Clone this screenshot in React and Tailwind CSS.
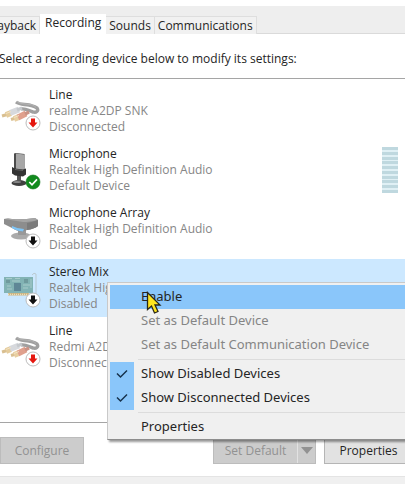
import { useState } from 'react';

const devices = [
  { id: 'realme', name: 'Line', detail: 'realme A2DP SNK', status: 'Disconnected', icon: 'line', badge: 'red' },
  { id: 'mic', name: 'Microphone', detail: 'Realtek High Definition Audio', status: 'Default Device', icon: 'mic', badge: 'ok', meter: true },
  { id: 'array', name: 'Microphone Array', detail: 'Realtek High Definition Audio', status: 'Disabled', icon: 'array', badge: 'black' },
  { id: 'stereo', name: 'Stereo Mix', detail: 'Realtek High Definition Audio', status: 'Disabled', icon: 'card', badge: 'black' },
  { id: 'redmi', name: 'Line', detail: 'Redmi A2DP SNK', status: 'Disconnected', icon: 'line', badge: 'red' },
];

function Badge({ kind }) {
  if (kind === 'ok') {
    return (
      <g>
        <circle cx="33" cy="41" r="7" fill="#118a1d" stroke="#0b7417" strokeWidth="0.6" />
        <path d="M29.3 41l2.7 2.8 5-5.4" fill="none" stroke="#fff" strokeWidth="1.7" />
      </g>
    );
  }
  const fill = kind === 'red' ? '#e5170f' : '#111';
  return (
    <g>
      <circle cx="33" cy="41" r="7" fill="#fff" stroke="#b4b4b4" strokeWidth="0.9" />
      <path d="M31 36.5h4v4h2.5L33 45.5l-4.5-5H31z" fill={fill} />
    </g>
  );
}

function LineArt() {
  return (
    <g fill="none">
      <path d="M16 20c4 3 8 2 13 3 4 1 6 1 8 3 2 3-1 5-4 4-4-1-7-4-12-3" stroke="#a0a0a0" strokeWidth="3.4" />
      <path d="M17 19.5c4 3 8 2 12 3 3 0 5 1 7 3" stroke="#b8b8b8" strokeWidth="0.8" />
      <path d="M2 34l5-1.5" stroke="#d9bf90" strokeWidth="3" />
      <path d="M6 33l5-2" stroke="#e5cc9c" strokeWidth="6" />
      <path d="M10 31l9-3.5" stroke="#d7d9dd" strokeWidth="6" />
      <path d="M17 28l5-2" stroke="#c5c8cc" strokeWidth="3.5" />
      <path d="M11 37.5l5-1.500" stroke="#d9bf90" strokeWidth="3" />
      <path d="M14 37l5-2" stroke="#e8cfa2" strokeWidth="6" />
      <path d="M18 35.500l8-4" stroke="#e0a08d" strokeWidth="6" />
      <path d="M25 32l4-2" stroke="#ca9285" strokeWidth="3.5" />
      <path d="M6 31.5l5-2M14 35.5l5-2" stroke="#f3e2c3" strokeWidth="1" />
    </g>
  );
}

function MicArt() {
  return (
    <g>
      <ellipse cx="19" cy="42" rx="7.5" ry="3" fill="#404040" />
      <ellipse cx="17" cy="41" rx="4" ry="1" fill="#858585" />
      <path d="M17 33h4v7h-4z" fill="#555" />
      <path d="M14 12.500l2-.5 8.500 1v16l-8.500 1-2-2z" fill="#4b4b4b" />
      <path d="M16 12.500l8 1v16l-8-1z" fill="#a7a7a7" />
      <path d="M12 26l3 1.500 8 1 3-1v6l-3 2-8-1-3-2z" fill="#343434" />
      <path d="M15 28.500l8 1" fill="none" stroke="#6f6f6f" strokeWidth="0.8" />
    </g>
  );
}

function ArrayArt() {
  return (
    <g>
      <ellipse cx="21" cy="36" rx="10" ry="3.5" fill="#aaaaaa" />
      <path d="M18 30h8v5h-8z" fill="#999999" />
      <path d="M4 19q4-1 8 0 10 1 23-1l3 2v6q-4 3-11 4l-4 1.500q-6 0-11-3.500l-8-4z" fill="#8d8d8d" />
      <path d="M4 19q4-1 8 0 10 1 23-1l3 2q-9 2-15 2z" fill="#a5a5a5" />
      <path d="M12 26q6 3 12 3l-1 2.500q-7-1-11-3.500z" fill="#7fc4f5" />
      <path d="M27 23q6-1 11-3v6q-4 3-11 4z" fill="#7b7b7b" />
    </g>
  );
}

function CardArt() {
  return (
    <g>
      <path d="M32 16q2-3 4-1v22" fill="none" stroke="#bac8cf" strokeWidth="1" />
      <path d="M4 18h29v16H4z" fill="#82b3b4" />
      <path d="M8 34h21v2.5H8z" fill="#cdb582" />
      <path d="M14 24h7v8h-7z" fill="#5f8796" />
      <path d="M24 20h4v4h-4zM6 21h4v3H6z" fill="#6f9a9d" />
      <path d="M6 19.5h6m3 0h5M7 27h4m-4 3h5m11-4h7m-7 3h5M12 22h8M31 20v9" stroke="#b2d2d1" strokeWidth="0.8" />
      <path d="M8 35.5h21" stroke="#eadfbd" strokeWidth="1.5" strokeDasharray="1 1" />
    </g>
  );
}

const art = { line: LineArt, mic: MicArt, array: ArrayArt, card: CardArt };

function DeviceIcon({ icon, badge }) {
  const Art = art[icon];
  return (
    <svg viewBox="0 0 44 58" className="h-[58px] w-11 shrink-0" aria-hidden="true">
      <Art />
      <Badge kind={badge} />
    </svg>
  );
}

function Tab({ children, active, onClick }) {
  return (
    <button
      type="button"
      role="tab"
      aria-selected={active}
      onClick={onClick}
      className={
        active
          ? 'h-5 bg-white px-[5px] pb-0.5 text-[12px] leading-4'
          : 'h-[18px] border-t border-r border-[#dedede] bg-[#f1f1f1] px-[3px] text-[12px] leading-4'
      }
    >
      {children}
    </button>
  );
}

function MenuItem({ children, disabled, highlighted, checked }) {
  const isCheck = checked !== undefined;
  return (
    <button
      type="button"
      role={isCheck ? 'menuitemcheckbox' : 'menuitem'}
      aria-checked={isCheck ? checked : undefined}
      disabled={disabled}
      className={`flex h-6 w-full items-center text-left font-['Noto_Sans',sans-serif] text-[13px] ${highlighted ? 'bg-[#8ac6fa]' : ''} ${disabled ? 'text-[#858585]' : 'text-[#252525]'}`}
    >
      <span className={`mr-[7px] flex h-6 w-6 shrink-0 items-center justify-center ${checked ? 'bg-[#8ac6fa]' : ''}`}>
        {checked && (
          <svg viewBox="0 0 12 10" className="h-2.5 w-3" aria-hidden="true">
            <path d="M1 4.5l3.5 3.5L11 1.5" fill="none" stroke="#17324c" strokeWidth="1.5" />
          </svg>
        )}
      </span>
      <span className="whitespace-nowrap">{children}</span>
    </button>
  );
}

function ContextMenu() {
  return (
    <div role="menu" className="absolute top-[204px] -right-5 left-[107px] border border-[#c9c9c9] border-b-[#8d8d8d] bg-[#f0f0f0] px-0.5 pt-0.5 shadow-[2px_2px_2px_rgba(0,0,0,0.4)]">
      <MenuItem highlighted>Enable</MenuItem>
      <MenuItem disabled>Set as Default Device</MenuItem>
      <MenuItem disabled>Set as Default Communication Device</MenuItem>
      <hr className="my-0.5 ml-7 border-[#dcdcdc]" />
      <MenuItem checked>Show Disabled Devices</MenuItem>
      <MenuItem checked>Show Disconnected Devices</MenuItem>
      <hr className="my-0.5 ml-7 border-[#dcdcdc]" />
      <MenuItem>Properties</MenuItem>
      <svg viewBox="0 0 16 24" className="absolute top-2 left-[38px] h-6 w-4" aria-hidden="true">
        <path d="M1.5 1.5v17l4-3.5 3 7 3.5-1.5-3-6.5h5z" fill="#ffe51e" stroke="#292719" strokeWidth="1.3" />
      </svg>
    </div>
  );
}

export default function App() {
  const [tab, setTab] = useState('Recording');
  const [selected, setSelected] = useState('stereo');

  return (
    <main className="overflow-hidden bg-white pt-1.5 font-['Open_Sans','Noto_Sans',sans-serif] text-[#252525]">
      <div role="tablist" className="flex h-7 items-end bg-[#eeeeee] whitespace-nowrap shadow-[inset_0_-1px_0_#dadada]">
        <div className="flex w-10 shrink-0 justify-end">
          <Tab active={tab === 'Playback'} onClick={() => setTab('Playback')}>Playback</Tab>
        </div>
        {['Recording', 'Sounds', 'Communications'].map((name) => (
          <Tab key={name} active={tab === name} onClick={() => setTab(name)}>{name}</Tab>
        ))}
      </div>

      <p className="-ml-px pt-[17px] pb-[11px] text-[12px] leading-4 whitespace-nowrap">
        Select a recording device below to modify its settings:
      </p>

      <div className="relative">
        <ul className="border-y border-[#a5a5a5] pt-[3px] pb-[45px]">
          {devices.map((d) => (
            <li key={d.id} className="pb-px">
              <button
                type="button"
                onClick={() => setSelected(d.id)}
                className={`flex h-[58px] w-full items-center text-left text-[12px] leading-4 ${selected === d.id ? 'bg-[#cce8ff]' : ''}`}
              >
                <DeviceIcon icon={d.icon} badge={d.badge} />
                <span className="ml-[5px] flex grow flex-col whitespace-nowrap text-[#868686]">
                  <span className="text-[#252525]">{d.name}</span>
                  <span>{d.detail}</span>
                  <span>{d.status}</span>
                </span>
                {d.meter && (
                  <span className="mr-[7px] flex h-[46px] flex-col justify-between bg-[#e0f0f5]">
                    {Array.from({ length: 10 }, (_, i) => (
                      <span key={i} className="h-[3px] w-4 bg-[#bfd8df]" />
                    ))}
                  </span>
                )}
              </button>
            </li>
          ))}
        </ul>
        <ContextMenu />
      </div>

      <div className="flex pt-3.5 pb-3 text-[12px]">
        <button type="button" disabled className="h-[27px] w-[84px] border border-[#bcbcbc] bg-[#cccccc] text-[#929292]">Configure</button>
        <div className="ml-auto flex h-[27px] border border-[#bcbcbc] bg-[#cccccc]">
          <button type="button" disabled className="w-[83px] text-[#929292]">Set Default</button>
          <button type="button" disabled aria-label="More defaults" className="flex w-[18px] items-center justify-center border-l border-[#e2e2e2]">
            <svg viewBox="0 0 12 7" className="h-[7px] w-3" aria-hidden="true"><path d="M0 0h12L6 7z" fill="#929292" /></svg>
          </button>
        </div>
        <button type="button" className="-mr-2 ml-2 h-[27px] w-[89px] border border-[#b5b5b5] bg-[#e2e2e2]">Properties</button>
      </div>
      <footer className="h-2 border-t border-[#e4e4e4] bg-[#f0f0f0]" />
    </main>
  );
}
